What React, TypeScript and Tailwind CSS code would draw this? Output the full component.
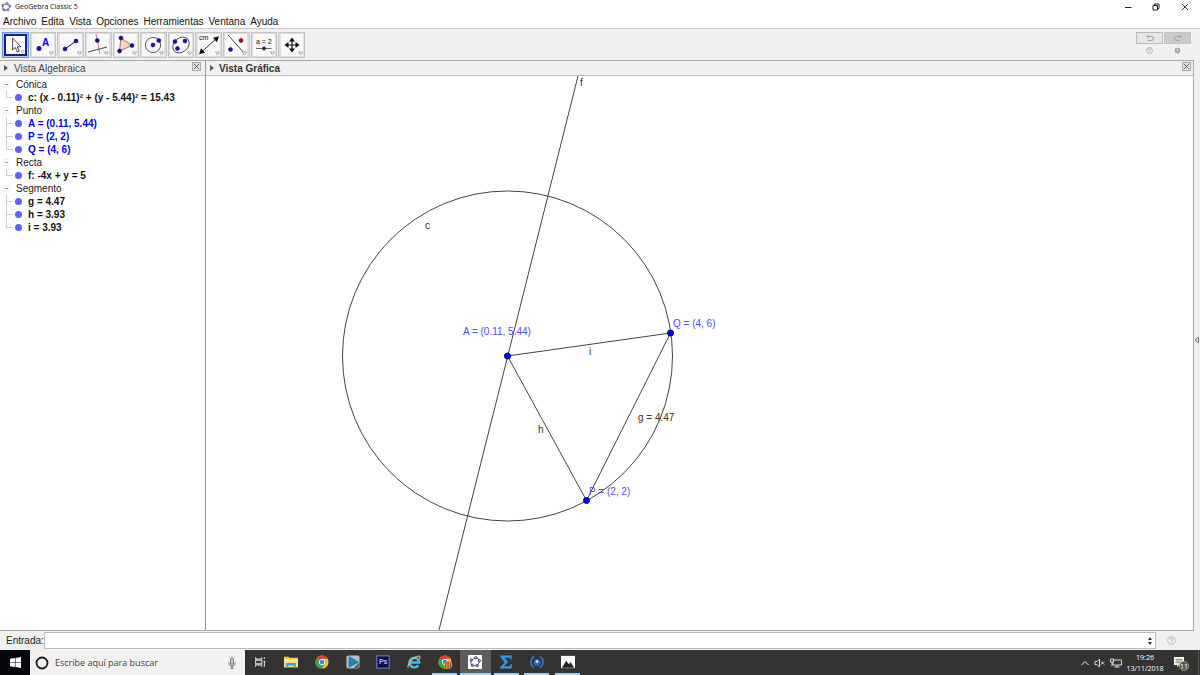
import React from 'react';

interface TreeItem {
  text: string;
  blue?: boolean;
}

interface TreeGroup {
  name: string;
  items: TreeItem[];
}

const MENU = ['Archivo', 'Edita', 'Vista', 'Opciones', 'Herramientas', 'Ventana', 'Ayuda'];

const GROUPS: TreeGroup[] = [
  { name: 'Cónica', items: [{ text: 'c: (x - 0.11)² + (y - 5.44)² = 15.43' }] },
  {
    name: 'Punto',
    items: [
      { text: 'A = (0.11, 5.44)', blue: true },
      { text: 'P = (2, 2)', blue: true },
      { text: 'Q = (4, 6)', blue: true },
    ],
  },
  { name: 'Recta', items: [{ text: 'f: -4x + y = 5' }] },
  { name: 'Segmento', items: [{ text: 'g = 4.47' }, { text: 'h = 3.93' }, { text: 'i = 3.93' }] },
];

const dot = (cx: number, cy: number, fill = '#1414b4') => (
  <circle cx={cx} cy={cy} r="2" fill={fill} stroke="#000040" strokeWidth="0.5" />
);

// Each tool is drawn in a 22x22 box
const TOOLS: { label: string; icon: React.ReactNode }[] = [
  {
    label: 'Elige y mueve',
    icon: <path d="M7.5 2.500v14.500l3.300-3 2.500 5.500 2.300-1-2.500-5.300h4.400z" fill="#fff" stroke="#333" strokeWidth="1.100" />,
  },
  {
    label: 'Punto',
    icon: (
      <>
        <circle cx="7" cy="14.500" r="2.500" fill="#1414b4" />
        <text x="10" y="11.500" fontSize="10" fontWeight="700" fill="#0000f0">A</text>
      </>
    ),
  },
  {
    label: 'Recta',
    icon: (
      <>
        <path d="M5 15 16 7" stroke="#222" strokeWidth="1" />
        {dot(5, 15)}
        {dot(16, 7)}
      </>
    ),
  },
  {
    label: 'Perpendicular',
    icon: (
      <>
        <path d="M9 0 13 20" stroke="#f06060" strokeWidth="0.9" />
        <path d="M1 18 20 13" stroke="#333" strokeWidth="0.9" />
        {dot(10.3, 6.5)}
      </>
    ),
  },
  {
    label: 'Polígono',
    icon: (
      <>
        <path d="M6 4 17 11.5 4.5 17z" fill="#f3d3c4" stroke="#a0522d" strokeWidth="0.8" />
        {dot(6, 4)}
        {dot(17, 11.5)}
        {dot(4.5, 17)}
      </>
    ),
  },
  {
    label: 'Circunferencia',
    icon: (
      <>
        <circle cx="11" cy="11" r="7.6" fill="none" stroke="#333" strokeWidth="0.8" />
        {dot(11, 11)}
        {dot(16.8, 6.5)}
      </>
    ),
  },
  {
    label: 'Elipse',
    icon: (
      <>
        <ellipse cx="11" cy="11" rx="9" ry="7" transform="rotate(-40 11 11)" fill="none" stroke="#333" strokeWidth="0.8" />
        {dot(7.5, 14.5)}
        {dot(5, 7.5)}
        {dot(15, 7)}
      </>
    ),
  },
  {
    label: 'Distancia',
    icon: (
      <>
        <path d="M3 18.5 19 4" stroke="#111" strokeWidth="0.9" />
        <path d="M1 20.200 3 14.300 7 18.700zM21 2.300 19 8.200 15 3.800z" fill="#111" />
        <text x="1" y="6" fontSize="7" fill="#111">cm</text>
      </>
    ),
  },
  {
    label: 'Simetría',
    icon: (
      <>
        <path d="M3 1 20 20" stroke="#333" strokeWidth="0.9" />
        {dot(5.5, 15.5)}
        {dot(16, 6.5, '#e00000')}
      </>
    ),
  },
  {
    label: 'Deslizador',
    icon: (
      <>
        <text x="3" y="10" fontSize="7" fill="#111">a = 2</text>
        <path d="M3 14.5h15.500" stroke="#444" strokeWidth="0.8" />
        <circle cx="11" cy="14.500" r="2" fill="#333" />
      </>
    ),
  },
  {
    label: 'Desplaza vista',
    icon: (
      <>
        <path d="M11 5v12M5 11h12" stroke="#111" strokeWidth="1.200" />
        <path d="M11 3.500 14 7.500H8zM11 18.500 14 14.500H8zM3.500 11 7.500 8v6zM18.500 11 14.500 8v6z" fill="#111" />
      </>
    ),
  },
];

const GeoGebraLogo: React.FC<{ className?: string }> = ({ className }) => (
  <svg viewBox="0 0 16 16" className={className}>
    <ellipse cx="8" cy="8" rx="6" ry="5" transform="rotate(-25 8 8)" fill="none" stroke="#667" strokeWidth="1.200" />
    {[[9.5, 2.6], [3, 5.5], [4.5, 12.500], [11, 12.500], [14, 6.500]].map(([x, y]) => (
      <circle key={x} cx={x} cy={y} r="1.800" fill="#9999ff" stroke="#223" strokeWidth="0.700" />
    ))}
  </svg>
);

const ChromeLogo: React.FC = () => (
  <>
    <circle cx="8" cy="8" r="7.500" fill="#fbc116" />
    <path d="M8 8 1.500 4.250A7.500 7.500 0 0 1 14.500 4.250H8z" fill="#e33b2e" />
    <path d="M8 8 1.500 4.250A7.500 7.500 0 0 0 8 15.500l3-5.750z" fill="#2da94f" />
    <circle cx="8" cy="8" r="3.500" fill="#fff" />
    <circle cx="8" cy="8" r="2.700" fill="#4285f4" />
  </>
);

const TASKS: { label: string; open?: boolean; active?: boolean; icon: React.ReactNode }[] = [
  {
    label: 'Vista de tareas',
    icon: <path d="M3 2.500v2h7v-2M3 13.500v-2h7v2M3 6h7v4H3zM13 2.500v2M13 6.500v7M12 7.500h2" fill="none" stroke="#ddd" strokeWidth="1.200" />,
  },
  {
    label: 'Explorador de archivos',
    icon: (
      <>
        <path d="M0 2h5.500l1 1H16v11H0z" fill="#f3c84b" />
        <path d="M0 4.500h16V14H0z" fill="#fde08a" />
        <path d="M2.500 14.500V9h11v5.500H11V12H5v2.500z" fill="#36a3dd" />
      </>
    ),
  },
  { label: 'Chrome', icon: <ChromeLogo /> },
  {
    label: 'Reproductor',
    icon: (
      <>
        <rect x="0.500" y="0.500" width="15" height="15" rx="2" fill="#b9bfc2" />
        <path d="M8 15.500h5.500a2 2 0 0 0 2-2V8z" fill="#666" />
        <path d="M3.500 2 14 8 3.500 14z" fill="#168ac5" stroke="#075a8c" strokeWidth="0.700" />
      </>
    ),
  },
  {
    label: 'Photoshop',
    icon: (
      <>
        <rect x="1" y="1" width="14" height="14" fill="#0b1044" stroke="#7f94e8" strokeWidth="1" />
        <text x="3.300" y="10.500" fontSize="8" fontWeight="700" fill="#a9bcff">Ps</text>
      </>
    ),
  },
  {
    label: 'Internet Explorer',
    icon: (
      <>
        <path d="M13 11.500a5.500 5.500 0 1 1 .800-3H4" fill="none" stroke="#45b8ee" strokeWidth="2.800" />
        <path d="M1.500 14.500C-.500 11.500 6 3 12 1.300c3.200-.800 3.200 1 2.200 3" fill="none" stroke="#f3cf4c" strokeWidth="1.200" />
      </>
    ),
  },
  {
    label: 'Chrome - perfil',
    open: true,
    icon: (
      <>
        <ChromeLogo />
        <circle cx="11.500" cy="11.500" r="4.500" fill="#eac52d" />
        <path d="M11.500 7v9M9 8v7M14 8v7" stroke="#8a2346" strokeWidth="1.200" />
      </>
    ),
  },
  {
    label: 'GeoGebra',
    open: true,
    active: true,
    icon: (
      <>
        <rect x="0" y="0" width="16" height="16" rx="1" fill="#fff" />
        <ellipse cx="8" cy="8" rx="5" ry="4.200" transform="rotate(-25 8 8)" fill="none" stroke="#555" strokeWidth="1" />
        {[[9, 3.200], [3.800, 5.800], [4.900, 11.800], [10.500, 12], [13, 6.500]].map(([x, y]) => (
          <circle key={x} cx={x} cy={y} r="1.400" fill="#9999ff" stroke="#222" strokeWidth="0.700" />
        ))}
      </>
    ),
  },
  {
    label: 'Editor de ecuaciones',
    open: true,
    icon: <path d="M1.500 .500h13v4.500H13c-.300-1.500-.900-2-2.200-2H6.500L10.500 8 5.500 12.800h5.500c1.400 0 2-.600 2.300-2.100h1.500L14.300 15.500H1v-1.300L6.500 8.600 1.500 2z" fill="#3497e8" />,
  },
  {
    label: 'Sincronizar',
    open: true,
    icon: (
      <>
        <path d="M5 1.500a7.200 7.200 0 0 0-.500 12.600M11 14.500a7.200 7.200 0 0 0 .500-12.600" fill="none" stroke="#4a78c2" strokeWidth="1.600" />
        <circle cx="8" cy="8.500" r="4" fill="#2468c9" />
        <circle cx="8" cy="7.500" r="1.600" fill="#d9ebff" />
      </>
    ),
  },
  {
    label: 'Fotos',
    open: true,
    icon: (
      <>
        <rect x="0" y="1" width="16" height="14" fill="#fff" />
        <path d="M1 14.500 6 6.500 9 10.500l2-2.500 4 6.500z" fill="#222" />
      </>
    ),
  },
];

const CloseBox: React.FC<{ label: string }> = ({ label }) => (
  <button aria-label={label} className="mt-px flex size-[9px] items-center justify-center self-start border border-[#aaa] bg-[#e0e0e0]">
    <svg viewBox="0 0 8 8" className="size-[7px]">
      <path d="M1 1l6 6M7 1 1 7" stroke="#555" strokeWidth="1" />
    </svg>
  </button>
);

const Triangle: React.FC = () => (
  <svg viewBox="0 0 4 6" className="h-[6px] w-1 shrink-0">
    <path d="M0 0 4 3 0 6z" fill="#555" />
  </svg>
);

const TitleBar: React.FC = () => (
  <header className="flex h-[14px] shrink-0 items-center bg-white pl-px">
    <GeoGebraLogo className="size-[10px]" />
    <h1 className="ml-1 font-['Open_Sans',sans-serif] text-[7px] leading-[14px]">GeoGebra Classic 5</h1>
    <div className="ml-auto flex">
      <button aria-label="Minimizar" className="flex w-7 justify-center">
        <svg viewBox="0 0 8 8" className="size-2"><path d="M1 4.500h6.500" stroke="#222" /></svg>
      </button>
      <button aria-label="Restaurar" className="flex w-7 justify-center">
        <svg viewBox="0 0 8 8" className="size-2"><path d="M1 2.500h4.500V7H1zM2.500 2.500V1H7v4.500H5.500" fill="none" stroke="#222" /></svg>
      </button>
      <button aria-label="Cerrar" className="flex w-[30px] justify-center">
        <svg viewBox="0 0 8 8" className="size-2"><path d="M1 1l6 6M7 1 1 7" stroke="#222" strokeWidth="0.900" /></svg>
      </button>
    </div>
  </header>
);

const Toolbar: React.FC = () => (
  <div className="flex h-8 shrink-0 items-center border-b border-[#aaa] pl-[2px]">
    <div className="grid w-[303px] grid-cols-11 gap-px">
      {TOOLS.map((tool, i) => (
        <button
          key={tool.label}
          aria-label={tool.label}
          className={
            i === 0
              ? 'flex h-[26px] items-center justify-center border border-[#5b9bd5] bg-[#a8cdf0]'
              : 'flex h-[26px] items-center justify-center border border-[#c4c4c4] bg-[#dedede]'
          }
        >
          <svg
            viewBox="0 0 22 22"
            className={
              i === 0
                ? "h-[22px] w-[23px] border-2 border-[#1b1b9c] bg-white font-['Liberation_Sans',sans-serif]"
                : "size-[22px] bg-[#f8f8f8] font-['Liberation_Sans',sans-serif]"
            }
          >
            {tool.icon}
            <path d="M17.500 18h4l-2 3z" fill="#fff" stroke="#888" strokeWidth="0.700" />
          </svg>
        </button>
      ))}
    </div>
    <div className="mr-[3px] ml-auto grid grid-cols-2 gap-x-px">
      <button aria-label="Deshacer" className="flex h-3 w-[27px] items-center justify-center border border-[#bbb] bg-[#e6e6e6]">
        <svg viewBox="0 0 8 8" className="size-2"><path d="M1 2.500h4.500a1.500 1.500 0 0 1 0 4H2M2.500 1 1 2.500 2.500 4" fill="none" stroke="#999" strokeWidth="0.900" /></svg>
      </button>
      <button aria-label="Rehacer" className="flex h-3 w-[27px] items-center justify-center border border-[#c4c4c4] bg-[#cacaca]">
        <svg viewBox="0 0 8 8" className="size-2"><path d="M7 2.500H2.500a1.500 1.500 0 0 0 0 4H6M5.500 1 7 2.500 5.500 4" fill="none" stroke="#999" strokeWidth="0.900" /></svg>
      </button>
      <button aria-label="Ayuda" className="flex h-[14px] items-center justify-center">
        <svg viewBox="0 0 8 8" className="size-[7px]">
          <circle cx="4" cy="4" r="3.400" fill="none" stroke="#999" strokeWidth="0.800" />
          <path d="M3 3c0-1.300 2-1.300 2 0 0 .700-1 .700-1 1.600M4 5.300v.900" fill="none" stroke="#999" strokeWidth="0.800" />
        </svg>
      </button>
      <button aria-label="Preferencias" className="flex h-[14px] items-center justify-center">
        <svg viewBox="0 0 8 8" className="size-[7px]">
          <circle cx="4" cy="4" r="2" fill="none" stroke="#888" strokeWidth="1.400" />
          <path d="M4 .500v1.500M4 6v1.500M.500 4H2M6 4h1.500M1.500 1.500l1 1M5.500 5.500l1 1M6.500 1.500l-1 1M2.500 5.500l-1 1" stroke="#888" strokeWidth="0.900" />
        </svg>
      </button>
    </div>
  </div>
);

const AlgebraView: React.FC = () => (
  <section className="flex w-[206px] shrink-0 flex-col border-r border-[#999]">
    <div className="flex h-[15px] shrink-0 items-center border-b border-[#bbb] bg-[#f0f0f0] pr-1 pl-1">
      <Triangle />
      <h2 className="ml-[6px] flex-1 text-[10px] text-[#444]">Vista Algebraica</h2>
      <CloseBox label="Cerrar Vista Algebraica" />
    </div>
    <ul className="flex-1 bg-white pt-[2px] pl-[3px]">
      {GROUPS.map(group => (
        <li key={group.name}>
          <div className="flex h-[13px] items-center">
            <button aria-label={`Contraer ${group.name}`} className="flex size-[7px] items-center justify-center border border-[#eee]">
              <span className="h-px w-[3px] bg-[#999]" />
            </button>
            <span className="ml-[6px] text-[10px] text-[#222]">{group.name}</span>
          </div>
          <ul className="ml-[3px]">
            {group.items.map((item, i) => (
              <li key={item.text} className="flex h-[13px] items-center">
                <span className={i === group.items.length - 1 ? 'h-[7px] w-px self-start bg-[#ccc]' : 'h-[13px] w-px self-start bg-[#ccc]'} />
                <span className="h-px w-[6px] bg-[#ccc]" />
                <span className="ml-[2px] size-[7px] rounded-full bg-[#6060ff]" />
                <span className={item.blue ? 'ml-[6px] text-[10px] font-bold text-[#0000ff]' : 'ml-[6px] text-[10px] font-bold'}>
                  {item.text}
                </span>
              </li>
            ))}
          </ul>
        </li>
      ))}
    </ul>
  </section>
);

const GraphicsView: React.FC = () => (
  <section className="flex min-w-0 flex-1 flex-col border-r border-[#aaa]">
    <div className="flex h-[15px] shrink-0 items-center border-b border-[#bbb] bg-[#f0f0f0] pr-[2px] pl-1">
      <Triangle />
      <h2 className="ml-[5px] flex-1 text-[10px] font-bold text-[#333]">Vista Gráfica</h2>
      <CloseBox label="Cerrar Vista Gráfica" />
    </div>
    <div className="min-h-0 flex-1 bg-white">
      <svg className="h-full w-full font-['Liberation_Sans',sans-serif] text-[10px]">
        <g fill="none" stroke="#444" strokeWidth="1">
          <circle cx="301.500" cy="280" r="165" />
          <path d="M372 0 233 554" />
          <path d="M301.500 280 464.500 257 380.500 424.500z" />
        </g>
        <g fill="#0000ff" stroke="#000060" strokeWidth="1">
          <circle cx="301.500" cy="280" r="3" />
          <circle cx="464.500" cy="257" r="3" />
          <circle cx="380.500" cy="424.500" r="3" />
        </g>
        <g fill="#4d4dff">
          <text x="257" y="259">A = (0.11, 5.44)</text>
          <text x="467" y="251">Q = (4, 6)</text>
          <text x="383" y="419">P = (2, 2)</text>
        </g>
        <g fill="#333">
          <text x="374" y="10">f</text>
          <text x="219" y="153">c</text>
          <text x="383" y="279">i</text>
          <text x="332" y="357">h</text>
          <text x="432" y="345">g = 4.47</text>
        </g>
      </svg>
    </div>
  </section>
);

const InputBar: React.FC = () => (
  <form className="flex h-5 shrink-0 items-center border-t border-[#aaa] pl-[6px]" onSubmit={e => e.preventDefault()}>
    <label htmlFor="entrada" className="text-[10px] text-[#222]">Entrada:</label>
    <div className="flex h-[17px] flex-1 items-center border border-[#bbb] bg-white pr-[3px]">
      <input id="entrada" type="text" className="h-full min-w-0 flex-1 px-1 text-[10px] outline-none" />
      <button type="button" aria-label="Historial" className="flex">
        <svg viewBox="0 0 4 8" className="h-2 w-1"><path d="M2 0 4 3H0zM2 8 4 5H0z" fill="#333" /></svg>
      </button>
    </div>
    <button type="button" aria-label="Ayuda de entrada" className="flex w-[38px] shrink-0 justify-center pr-2">
      <svg viewBox="0 0 10 10" className="size-[9px]">
        <circle cx="5" cy="5" r="4.400" fill="#f4f4f4" stroke="#aaa" strokeWidth="0.800" />
        <path d="M3.600 4c0-2 2.800-2 2.800 0 0 1-1.400 1-1.400 2.200M5 7v1" fill="none" stroke="#999" strokeWidth="0.900" />
      </svg>
    </button>
  </form>
);

const Taskbar: React.FC = () => (
  <footer className="flex h-[25px] shrink-0 bg-[#343332] font-['Open_Sans',sans-serif] text-white">
    <button aria-label="Inicio" className="flex w-[30px] items-center justify-center bg-[#05070c]">
      <svg viewBox="0 0 10 10" className="size-[11px]">
        <path d="M0 1.500 4.500.900v3.800H0zM5 .800 10 0v4.700H5zM0 5.200h4.500V9L0 8.400zM5 5.200h5V10L5 9.100z" fill="#fff" />
      </svg>
    </button>
    <div className="flex w-[215px] items-center bg-[#f1f1f1] pr-2 pl-[5px]">
      <svg viewBox="0 0 14 14" className="size-[14px] shrink-0">
        <circle cx="7" cy="7" r="5.500" fill="none" stroke="#1a1a1a" strokeWidth="1.800" />
      </svg>
      <input
        type="text"
        aria-label="Buscar"
        placeholder="Escribe aquí para buscar"
        className="ml-[6px] min-w-0 flex-1 text-[9px] outline-none placeholder:text-[#444]"
      />
      <button aria-label="Buscar por voz" className="flex">
        <svg viewBox="0 0 10 12" className="h-3 w-[10px]">
          <rect x="3.500" y="1" width="3" height="6.500" rx="1.500" fill="#ccc" stroke="#555" strokeWidth="0.800" />
          <path d="M2 5.500v1c0 3.500 6 3.500 6 0v-1M5 9.200v2M3.500 11.300h3" fill="none" stroke="#555" strokeWidth="0.900" />
        </svg>
      </button>
    </div>
    <nav className="grid w-[338px] grid-cols-11">
      {TASKS.map(task => (
        <button
          key={task.label}
          aria-label={task.label}
          className={task.active ? 'flex flex-col items-center bg-[#5d5d5c]' : 'flex flex-col items-center'}
        >
          <svg viewBox="0 0 16 16" className="mt-[5px] mb-1 size-[14px] shrink-0 font-['Liberation_Sans',sans-serif]">{task.icon}</svg>
          {task.open && <span className={task.active ? 'h-[2px] w-full bg-[#a4cfee]' : 'h-[2px] w-[25px] bg-[#a4cfee]'} />}
        </button>
      ))}
    </nav>
    <div className="ml-auto flex items-center">
      <button aria-label="Mostrar iconos ocultos" className="flex">
        <svg viewBox="0 0 8 8" className="size-2"><path d="M.500 6 4 2.500 7.500 6" fill="none" stroke="#eee" strokeWidth="1" /></svg>
      </button>
      <button aria-label="Sonido" className="ml-[5px] flex">
        <svg viewBox="0 0 11 10" className="h-[10px] w-[11px]">
          <path d="M1 3.500h2l2.500-2.500v8L3 6.500H1zM7 3.500l3 3M10 3.500l-3 3" fill="none" stroke="#eee" strokeWidth="0.900" />
        </svg>
      </button>
      <button aria-label="Red" className="ml-[5px] flex">
        <svg viewBox="0 0 12 10" className="h-[10px] w-3">
          <path d="M4 2h7.500v5H3V4M7 7v2M4.500 9H9.500M.500 1h3v3h-3zM2 4v4.500" fill="none" stroke="#eee" strokeWidth="0.900" />
        </svg>
      </button>
      <div className="ml-[3px] flex w-[40px] flex-col items-center text-[7px] leading-[11px]">
        <time>19:26</time>
        <time>13/11/2018</time>
      </div>
      <button aria-label="Notificaciones: 11" className="mr-[9px] ml-2 flex">
        <svg viewBox="0 0 16 16" className="size-4">
          <path d="M1 2h10v8H6l-2 2v-2H1z" fill="#fff" />
          <path d="M2.500 4.300h7M2.500 6h7M2.500 7.700h5" stroke="#444" strokeWidth="0.700" />
          <circle cx="11" cy="11" r="4.600" fill="#555" stroke="#aaa" strokeWidth="0.700" />
          <text x="7" y="13.500" fontSize="7" fill="#fff">11</text>
        </svg>
      </button>
      <span className="h-[25px] w-[2px] border-l border-[#555]" />
    </div>
  </footer>
);

const App: React.FC = () => (
  <div className="flex h-screen flex-col overflow-hidden bg-[#f0f0f0] font-['Liberation_Sans',sans-serif] text-[#111]">
    <TitleBar />
    <nav className="flex h-[15px] shrink-0 items-center gap-[5px] border-b border-[#c8c8c8] bg-white pt-[2px] pl-[3px]">
      {MENU.map(item => (
        <button key={item} className="text-[10px] leading-[12px]">{item}</button>
      ))}
    </nav>
    <div className="flex min-h-0 flex-1">
      <div className="flex min-w-0 flex-1 flex-col">
        <Toolbar />
        <main className="flex min-h-0 flex-1">
          <AlgebraView />
          <GraphicsView />
        </main>
        <InputBar />
      </div>
      <aside className="flex w-[6px] shrink-0 items-center">
        <button aria-label="Mostrar panel lateral" className="flex">
          <svg viewBox="0 0 5 8" className="h-2 w-[5px]"><path d="M4.500 1v6L.800 4z" fill="#ddd" stroke="#777" strokeWidth="0.900" /></svg>
        </button>
      </aside>
    </div>
    <Taskbar />
  </div>
);

export default App;
